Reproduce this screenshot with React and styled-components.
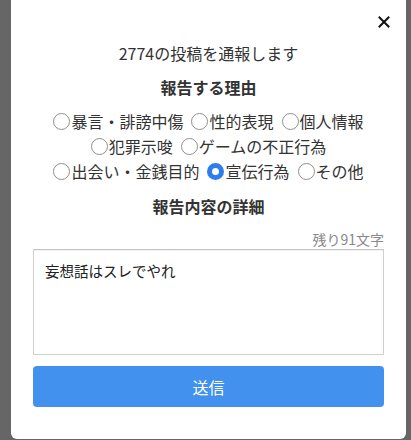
import React, { useState } from 'react';
import styled, { createGlobalStyle } from 'styled-components';

const GlobalStyle = createGlobalStyle`
  html, body {
    margin: 0;
    padding: 0;
    background: #666666;
  }
  body {
    font-family: "Noto Sans CJK JP", "Noto Sans", sans-serif;
    color: #333;
  }
`;

const Overlay = styled.div`
  height: 440px;
  padding: 0 5px 0 11px;
  overflow: hidden;
`;

const Modal = styled.div`
  background: #fff;
  height: 439px;
  border-radius: 0 0 6px 6px;
  padding: 0 22px;
  box-sizing: border-box;
  display: flex;
  flex-direction: column;
`;

const Header = styled.div`
  display: flex;
  justify-content: flex-end;
  height: 22px;
  padding-top: 12px;
  margin-right: -10px;
`;

const CloseButton = styled.button`
  border: 0;
  background: none;
  padding: 0;
  width: 20px;
  height: 20px;
  display: flex;
  align-items: center;
  justify-content: center;
  cursor: pointer;
`;

const Title = styled.p`
  margin: 7px 0 0;
  text-align: center;
  font-size: 16px;
  line-height: 24px;
`;

const Heading = styled.h3`
  margin: ${p => p.$top}px 0 0;
  text-align: center;
  font-size: 16px;
  line-height: 24px;
  font-weight: 700;
  color: #333;
`;

const Reasons = styled.div`
  margin-top: 10px;
  display: flex;
  flex-wrap: wrap;
  justify-content: center;
  column-gap: 8px;
`;

const Option = styled.label`
  display: flex;
  align-items: center;
  gap: 1px;
  height: 25px;
  font-size: 16px;
  line-height: 25px;
  cursor: pointer;
  white-space: nowrap;
`;

const Circle = styled.span`
  flex: none;
  width: 17px;
  height: 17px;
  border-radius: 50%;
  box-sizing: border-box;
  border: ${p => (p.$checked ? '5.5px solid #2f7cf0' : '1.5px solid #8f8f8f')};
  background: #fff;
`;

const Counter = styled.div`
  margin-top: 11px;
  text-align: right;
  font-size: 14px;
  line-height: 20px;
  color: #8a8a8a;
`;

const TextArea = styled.textarea`
  display: block;
  width: 100%;
  height: 106px;
  box-sizing: border-box;
  margin: 0;
  padding: 10px 11px;
  border: 1px solid #cfcfcf;
  border-top-color: #c4c4c4;
  border-radius: 0;
  box-shadow: inset 0 1px 1px rgba(0, 0, 0, 0.06);
  font-family: inherit;
  font-size: 14.5px;
  line-height: 22px;
  color: #222;
  resize: none;
  outline: none;
`;

const SubmitButton = styled.button`
  margin-top: 11px;
  height: 41px;
  width: 100%;
  border: 0;
  border-radius: 4px;
  background: #4391ee;
  color: #fff;
  font-family: inherit;
  font-size: 16px;
  cursor: pointer;
`;

const reasons = [
  '暴言・誹謗中傷',
  '性的表現',
  '個人情報',
  '犯罪示唆',
  'ゲームの不正行為',
  '出会い・金銭目的',
  '宣伝行為',
  'その他',
];

export default function App() {
  const [selected, setSelected] = useState('宣伝行為');
  const [text, setText] = useState('妄想話はスレでやれ');

  return (
    <>
      <GlobalStyle />
      <Overlay>
        <Modal>
          <Header>
            <CloseButton aria-label='閉じる'>
              <svg width='12' height='12' viewBox='0 0 12 12'>
                <path d='M1.5 1.5 L10.5 10.5 M10.5 1.5 L1.5 10.5' stroke='#111' strokeWidth='2' strokeLinecap='square' />
              </svg>
            </CloseButton>
          </Header>
          <Title>2774の投稿を通報します</Title>
          <Heading $top={10}>報告する理由</Heading>
          <Reasons>
            {reasons.map(r => (
              <Option key={r} onClick={() => setSelected(r)}>
                <Circle $checked={selected === r} />
                {r}
              </Option>
            ))}
          </Reasons>
          <Heading $top={10}>報告内容の詳細</Heading>
          <Counter>残り{100 - text.length}文字</Counter>
          <TextArea value={text} onChange={e => setText(e.target.value)} />
          <SubmitButton>送信</SubmitButton>
        </Modal>
      </Overlay>
    </>
  );
}
